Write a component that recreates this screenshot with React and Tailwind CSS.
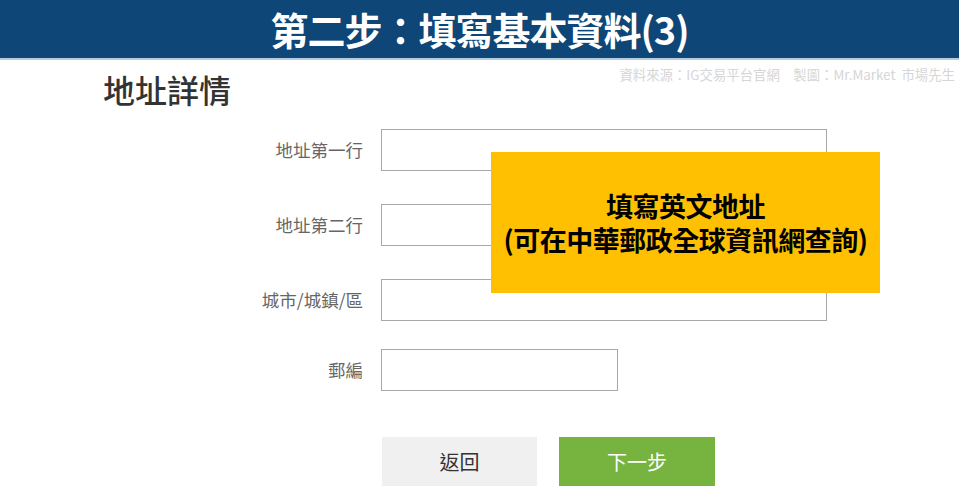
export default function App() {
  const rows = [
    { label: "地址第一行", width: "w-[446px]", mt: "mt-[21px]" },
    { label: "地址第二行", width: "w-[446px]", mt: "mt-[33px]" },
    { label: "城市/城鎮/區", width: "w-[446px]", mt: "mt-[33px]" },
    { label: "郵編", width: "w-[237px]", mt: "mt-[28px]" },
  ];

  return (
    <div
      className="relative w-[959px] h-[494px] overflow-hidden bg-white"
      style={{ fontFamily: '"Noto Sans CJK TC", "Noto Sans", sans-serif' }}
    >
      {/* Banner */}
      <header className="h-[60px] bg-[#0d4677] border-b-2 border-[#b4cde0] flex items-center justify-center">
        <h1 className="text-white text-[38px] font-bold leading-none tracking-[-1px]">
          第二步：填寫基本資料(3)
        </h1>
      </header>

      {/* Heading row */}
      <div className="flex justify-between items-start">
        <h2 className="ml-[103px] mt-[10px] text-[32px] leading-[38px] font-medium text-[#333]">
          地址詳情
        </h2>
        <div className="mr-[4px] mt-[6px] text-[13.4px] leading-[16px] text-[#d6d6d6] whitespace-pre">
          資料來源：IG交易平台官網　製圖：Mr.Market  市場先生
        </div>
      </div>

      {/* Form */}
      <div className="flex flex-col">
        {rows.map((r) => (
          <div key={r.label} className={`flex items-center ${r.mt}`}>
            <label className="w-[363px] text-right text-[17.5px] text-[#666]">
              {r.label}
            </label>
            <div
              className={`ml-[18px] h-[42px] ${r.width} border border-[#a9a9a9] bg-white`}
            />
          </div>
        ))}

        <div className="flex ml-[382px] mt-[46px] gap-[22px]">
          <button className="w-[155px] h-[49px] bg-[#f0f0f0] text-[#333] text-[20px]">
            返回
          </button>
          <button className="w-[156px] h-[49px] bg-[#76b33f] text-white text-[20px]">
            下一步
          </button>
        </div>
      </div>

      {/* Callout */}
      <div className="absolute left-[491px] top-[152px] w-[389px] h-[141px] bg-[#fec000] flex flex-col items-center justify-center text-black font-bold text-[27px] leading-[34px] tracking-[-0.5px]">
        <div>填寫英文地址</div>
        <div>(可在中華郵政全球資訊網查詢)</div>
      </div>
    </div>
  );
}
